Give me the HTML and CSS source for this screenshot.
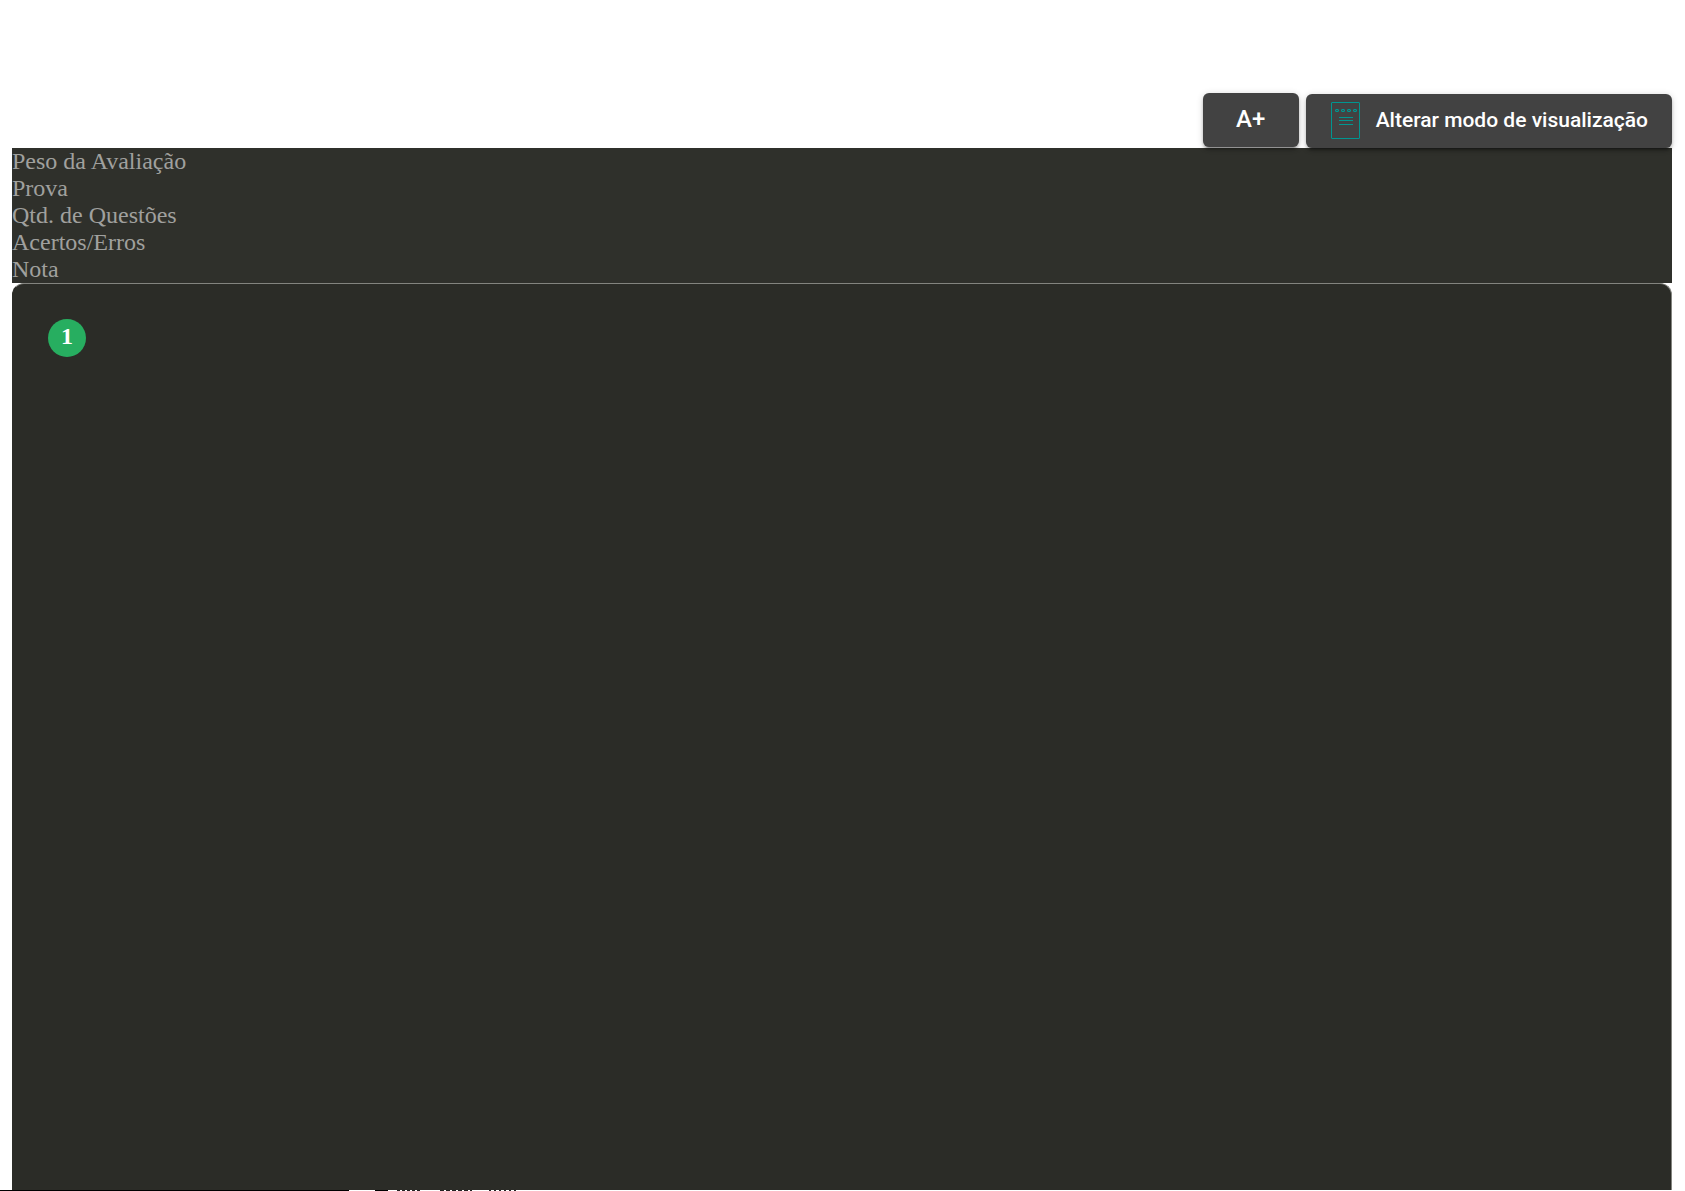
FILE: index.html
```
<!DOCTYPE html>
<html lang="pt-BR">
<head>
    <meta charset="UTF-8">
    <meta name="viewport" content="width=device-width, initial-scale=1.0">
    <title>Avaliação</title>
    <link rel="stylesheet" href="styles.css">
</head>
<body>

    <header class="toolbar">
        <button type="button" class="btn btn-font">A+</button>
        <button type="button" class="btn btn-mode">
            <svg class="icon-notes" viewBox="0 0 30 38" aria-hidden="true">
                <rect x="1.5" y="1.5" width="28" height="36" rx="0.5"/>
                <g class="holes">
                    <rect x="5.5" y="8.5" width="3" height="2" rx="0.5"/>
                    <rect x="11.5" y="8.5" width="3" height="2" rx="0.5"/>
                    <rect x="17.5" y="8.5" width="3" height="2" rx="0.5"/>
                    <rect x="23.5" y="8.5" width="3" height="2" rx="0.5"/>
                </g>
                <path d="M9 16.5h14M9 19.5h14M9 23.5h14"/>
            </svg>
            <span>Alterar modo de visualização</span>
        </button>
    </header>

    <main class="content">
        <section class="summary">
            <div>Peso da Avaliação</div>
            <div>Prova</div>
            <div>Qtd. de Questões</div>
            <div>Acertos/Erros</div>
            <div>Nota</div>
        </section>

        <section class="question">
            <span class="question-number">1</span>
        </section>
    </main>

    <footer class="strip"></footer>

</body>
</html>
```
FILE: styles.css
```
:root {
    --bg-color: #ffffff; --panel-color: #2f302b; --card-color: #2b2c27;
    --button-color: #424242; --muted-color: #a0a09e; --green: #27ae60; --teal: #009691;
}
* { box-sizing: border-box; margin: 0; padding: 0; }
body {
    display: flex; flex-direction: column; min-height: 100vh;
    font-family: "Liberation Serif", serif; font-size: 24px; line-height: 27px;
    background-color: var(--bg-color);
}

.toolbar {
    display: flex; justify-content: flex-end; align-items: flex-start; gap: 7px;
    padding: 93px 13px 0 12px; position: relative; z-index: 1;
}
.btn {
    display: flex; align-items: center; justify-content: center; height: 54px; padding: 0 24px 2px;
    border: none; border-radius: 6px; background-color: var(--button-color); color: #fff;
    font-family: Roboto, sans-serif; font-weight: 500; cursor: pointer;
    box-shadow: 0 4px 2px -3px rgba(0, 0, 0, 0.3), 0 3px 3px rgba(0, 0, 0, 0.2), 0 1px 7px rgba(0, 0, 0, 0.16);
}
.btn-font { width: 96px; font-size: 24px; }
.btn-mode { margin-top: 1px; gap: 16px; font-size: 21px; }
.icon-notes { width: 30px; height: 38px; fill: none; stroke: var(--teal); stroke-width: 1; }
.icon-notes .holes { fill: var(--teal); fill-opacity: 0.3; }

.content { display: flex; flex-direction: column; flex: 1; padding: 0 13px 0 12px; }
.summary { background-color: var(--panel-color); color: var(--muted-color); }
.question {
    flex: 1; padding: 35px; background-color: var(--card-color);
    border: 1px solid #83847f; border-bottom: none; border-left-color: var(--card-color);
    border-radius: 12px 12px 0 0;
}
.question-number {
    display: flex; justify-content: center; width: 38px; height: 38px; padding-top: 4px;
    border-radius: 50%; background-color: var(--green); color: #fff; font-weight: bold;
}

/* thin line closing the page */
.strip {
    height: 1px;
    background:
        linear-gradient(#000, #000) 375px 0 / 13px 1px no-repeat,
        repeating-linear-gradient(90deg, #222 0 3px, #fff 3px 5px) 397px 0 / 25px 1px no-repeat,
        repeating-linear-gradient(90deg, #222 0 4px, #fff 4px 6px) 440px 0 / 32px 1px no-repeat,
        repeating-linear-gradient(90deg, #222 0 2px, #fff 2px 5px) 489px 0 / 30px 1px no-repeat,
        linear-gradient(#000, #000) 0 0 / 349px 1px no-repeat;
}
```
